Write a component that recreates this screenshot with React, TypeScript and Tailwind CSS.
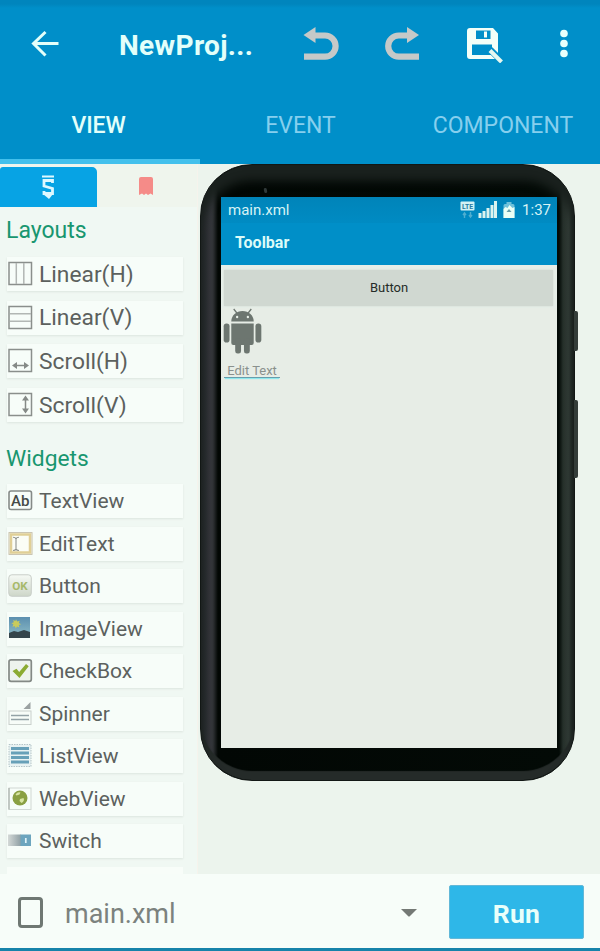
import React from "react";

type IconProps = { children: React.ReactNode };

function Icon({ children }: IconProps) {
  return (
    <svg width="26" height="26" viewBox="0 0 26 26" fill="none" className="shrink-0">
      {children}
    </svg>
  );
}

const frame = <rect x="2" y="1.5" width="22.5" height="22" stroke="#8a8f8c" strokeWidth="1.5" />;

const layouts = [
  {
    name: "Linear(H)",
    icon: (
      <Icon>
        {frame}
        <path d="M9.3 2v21M16.8 2v21" stroke="#b2b7b4" strokeWidth="1.5" />
      </Icon>
    ),
  },
  {
    name: "Linear(V)",
    icon: (
      <Icon>
        {frame}
        <path d="M3 8.7h21M3 16.3h21" stroke="#b2b7b4" strokeWidth="1.5" />
      </Icon>
    ),
  },
  {
    name: "Scroll(H)",
    icon: (
      <Icon>
        {frame}
        <path d="M7 17.5h13" stroke="#858a87" strokeWidth="1.5" />
        <path d="M5 17.5l5-3.5v7zM22 17.5l-5-3.5v7z" fill="#858a87" />
      </Icon>
    ),
  },
  {
    name: "Scroll(V)",
    icon: (
      <Icon>
        {frame}
        <path d="M18.5 6v13" stroke="#858a87" strokeWidth="1.5" />
        <path d="M18.5 3.5l-3.5 5h7zM18.5 21.5l-3.5-5h7z" fill="#858a87" />
      </Icon>
    ),
  },
];

const widgets = [
  {
    name: "TextView",
    icon: (
      <Icon>
        <rect x="2" y="3" width="22.5" height="18.5" rx="2" stroke="#858a87" strokeWidth="1.6" />
        <text x="13.2" y="17.5" textAnchor="middle" fontFamily="Roboto, sans-serif" fontSize="15.5" fontWeight="500" fill="#454a47" textLength="18.5" lengthAdjust="spacingAndGlyphs">
          Ab
        </text>
      </Icon>
    ),
  },
  {
    name: "EditText",
    icon: (
      <Icon>
        <rect x="2" y="1.6" width="23" height="21.8" stroke="#c6bfaa" fill="#fbfdf6" />
        <rect x="4" y="3.5" width="19" height="18" stroke="#e0cf96" strokeWidth="2.5" fill="#fbfdf6" />
        <path d="M6 6.2q2.5 0 3 1.6q.5-1.6 3-1.6M9 7.5v11M6 19.5q2.5 0 3-1.5q.5 1.5 3 1.5" stroke="#8f928d" strokeWidth="1.1" />
      </Icon>
    ),
  },
  {
    name: "Button",
    icon: (
      <Icon>
        <defs>
          <linearGradient id="okFill" x1="0" y1="0" x2="0" y2="1">
            <stop offset="0" stopColor="#f6faf5" />
            <stop offset="1" stopColor="#cdd6c8" />
          </linearGradient>
        </defs>
        <rect x="1.8" y="1.8" width="22.5" height="21.5" rx="3" fill="url(#okFill)" stroke="#c8cec8" />
        <text x="13" y="16.5" textAnchor="middle" fontFamily="Roboto, sans-serif" fontSize="11" fontWeight="700" fill="#a7b96b" textLength="15.5" lengthAdjust="spacingAndGlyphs">
          OK
        </text>
      </Icon>
    ),
  },
  {
    name: "ImageView",
    icon: (
      <Icon>
        <defs>
          <linearGradient id="sky" x1="0" y1="0" x2="0" y2="1">
            <stop offset="0" stopColor="#5c8faf" />
            <stop offset="1" stopColor="#90bfc8" />
          </linearGradient>
        </defs>
        <rect x="2" y="1" width="21" height="21" fill="url(#sky)" />
        <path d="M2 17l5-2 4 1 6-2 6 2v6H2z" fill="#35454b" />
        <path d="M9 3.200l1.200 2.300 2.500-.7-.9 2.300 2.300 1.100-2.400.9.700 2.400-2.400-.9-1.200 2-.9-2.400-2.500.5 1-2.400-2-1.100 2.400-.9-.6-2.200 2.200.9z" fill="#c9cb5c" />
      </Icon>
    ),
  },
  {
    name: "CheckBox",
    icon: (
      <Icon>
        <rect x="2" y="1.8" width="22.3" height="21.5" rx="2" fill="#edf3ed" stroke="#838985" strokeWidth="1.7" />
        <path d="M5.5 13l4-2.2 2.7 3.2L19 6l2.7 2.2L12.5 20z" fill="#8bab32" />
      </Icon>
    ),
  },
  {
    name: "Spinner",
    icon: (
      <Icon>
        <path d="M23.5 1v7h-7z" fill="#9ba2a2" />
        <rect x="2" y="10" width="22" height="13.5" fill="#f7fcf8" stroke="#c9d0cc" />
        <path d="M4 14.5h18M4 18.5h18" stroke="#93a2a6" strokeWidth="1.5" />
      </Icon>
    ),
  },
  {
    name: "ListView",
    icon: (
      <Icon>
        <rect x="2" y="1.5" width="22" height="22" fill="#e8f2f2" stroke="#b5c5c8" strokeDasharray="1.5 1" />
        <path d="M4 5.5h18M4 10h18M4 14.5h18M4 19h18" stroke="#67a0b8" strokeWidth="2.8" />
      </Icon>
    ),
  },
  {
    name: "WebView",
    icon: (
      <Icon>
        <rect x="2" y="2" width="22" height="21.5" stroke="#d1d8d3" />
        <path d="M2 2v21.5" stroke="#9da59f" />
        <circle cx="13" cy="12" r="7.5" fill="#8aa043" />
        <path d="M8.500 8.500q2-3 5-2l-1 2-3 1zM13 13l3.500-1q1.500 3-2 5l-2-2z" fill="#d8e5a1" />
      </Icon>
    ),
  },
  {
    name: "Switch",
    icon: (
      <Icon>
        <defs>
          <linearGradient id="track">
            <stop offset="0" stopColor="#d4d9d7" />
            <stop offset="1" stopColor="#8f9fa4" />
          </linearGradient>
        </defs>
        <rect x="1" y="6.5" width="13" height="11.5" fill="url(#track)" />
        <rect x="13.500" y="6.5" width="10.5" height="11.5" fill="#6ca5be" />
        <path d="M18.800 10v5" stroke="#e0f3f8" strokeWidth="1.7" />
      </Icon>
    ),
  },
];

type RowProps = { name: string; icon: React.ReactNode; textClass: string };

function PaletteRow({ name, icon, textClass }: RowProps) {
  return (
    <div className="ml-[7px] flex h-[34px] w-[176px] items-center bg-[#f7fdf9] shadow-[0_1px_2px_#dce5df]">
      <div className="flex">{icon}</div>
      <span className={`ml-[6px] leading-none text-[#5c615e] ${textClass}`}>{name}</span>
    </div>
  );
}

function Header() {
  return (
    <header className="flex h-[164px] shrink-0 flex-col bg-[linear-gradient(#0085bd_0,#0085bd_4px,#008fc9_8px)] text-[#e3fffa]">
      <div className="flex h-[88px] items-center pl-[30px]">
        <svg width="30" height="30" viewBox="0 0 30 30" fill="none" stroke="currentColor" strokeWidth="3" className="shrink-0">
          <path d="M15.5 3L3.5 14.5L15.5 26.5M3.5 14.500h25" />
        </svg>
        <h1 className="ml-[59px] w-[182px] pt-[3px] text-[28px] font-bold leading-none tracking-[0.35px]">NewProj...</h1>
        <svg width="38" height="38" viewBox="0 0 38 38" fill="none" className="shrink-0">
          <path d="M13 10.5h11a10.6 10.6 0 010 21.200H3" stroke="#c5c9c8" strokeWidth="6.2" />
          <path d="M2.5 10l12-8v16z" fill="#c5c9c8" />
        </svg>
        <svg width="38" height="38" viewBox="0 0 38 38" fill="none" className="ml-[44px] shrink-0">
          <path d="M25 10.5H15.800a10.600 10.600 0 000 21.200H36" stroke="#c5c9c8" strokeWidth="6.2" />
          <path d="M36 10l-12-8v16z" fill="#c5c9c8" />
        </svg>
        <svg width="40" height="38" viewBox="0 0 40 38" fill="none" className="ml-[44px] shrink-0">
          <path fillRule="evenodd" d="M5 3h23l5 5.500V31a3 3 0 01-3 3H5a3 3 0 01-3-3V6a3 3 0 013-3zM11 5.500v8.500h14.500V5.500zM7 19.500v10.500h20V19.500z" fill="#f4fff8" />
          <path d="M20.500 6.500v6" stroke="#f4fff8" strokeWidth="3" />
          <path d="M25 24.5l12 12" stroke="#008fc9" strokeWidth="6.5" />
          <path d="M25 25.5l11.500 11.500" stroke="#e6f8f0" strokeWidth="4" />
        </svg>
        <svg width="10" height="30" viewBox="0 0 10 30" fill="#e9fffb" className="ml-[54px] shrink-0">
          <circle cx="5" cy="4.5" r="3.8" />
          <circle cx="5" cy="14.5" r="3.8" />
          <circle cx="5" cy="24.5" r="3.8" />
        </svg>
      </div>
      <nav className="grid flex-1 grid-cols-[200px_200px_200px] text-center text-[23px] leading-none">
        <div className="border-b-[5px] border-[#43c0ec] pt-[26px] pr-[3px] font-medium tracking-[-0.1px]">VIEW</div>
        <div className="pt-[26px] pl-[1px] text-[#86cfee]">EVENT</div>
        <div className="pt-[26px] pl-[6px] text-[#86cfee]">COMPONENT</div>
      </nav>
    </header>
  );
}

function Palette() {
  return (
    <aside className="flex w-[198px] shrink-0 flex-col overflow-hidden border-r border-[#f6f3ec] bg-[#f0f8f3]">
      <div className="flex h-[43px] shrink-0 bg-[#eff5ed] pt-[3px]">
        <div className="flex w-[97px] items-center justify-center rounded-tr-[5px] rounded-tl-[3px] bg-[#07a3e4]">
          <svg width="16" height="26" viewBox="0 0 16 26" fill="none" stroke="#dff8ff" className="mr-[1px]">
            <path d="M2 2.500h12" strokeWidth="2" />
            <path d="M12.500 9V6.500H4v5.500l8.500 2.500v5H4V17" strokeWidth="2.800" />
            <path d="M3 20h10l-4 5z" fill="#dff8ff" stroke="none" />
          </svg>
        </div>
        <div className="flex flex-1 items-center justify-center">
          <svg width="16" height="20" viewBox="0 0 16 20" className="mr-[3px] mb-[2px]">
            <path d="M3 1h10q2 0 2 2v16l-2.500-1.500L10 19l-2-1.500L6 19l-2-1.500L1 19V3q0-2 2-2z" fill="#f58b88" />
          </svg>
        </div>
      </div>
      <h2 className="mt-[11px] ml-[6px] h-[24px] pt-[1px] text-[23px] leading-[24px] text-[#18966f]">Layouts</h2>
      <div className="mt-[15px] flex flex-col gap-[9.7px]">
        {layouts.map((item) => (
          <PaletteRow key={item.name} name={item.name} icon={item.icon} textClass="pt-[2px] text-[22.8px]" />
        ))}
      </div>
      <h2 className="mt-[24px] ml-[6px] h-[24px] pt-[1px] text-[22.8px] leading-[24px] text-[#18966f]">Widgets</h2>
      <div className="mt-[14px] flex flex-col gap-[8.5px]">
        {widgets.map((item) => (
          <PaletteRow key={item.name} name={item.name} icon={item.icon} textClass="pt-[1px] text-[21px]" />
        ))}
        <div className="ml-[7px] h-[34px] w-[176px] bg-[#f8fdf9]" />
      </div>
    </aside>
  );
}

function StatusBar() {
  return (
    <div className="flex h-[26px] items-center bg-[linear-gradient(#0084b9,#008bc3)] pr-[6px] pl-[7px] text-[15px] leading-none text-[#d6f3f5]">
      <span>main.xml</span>
      <svg width="15" height="20" viewBox="0 0 15 20" className="ml-auto">
        <rect x="0.5" y="1.5" width="14" height="9" rx="1" fill="#d3f2f5" />
        <text x="7.5" y="8.9" fontFamily="Roboto, sans-serif" fontSize="8" fontWeight="700" textAnchor="middle" textLength="11" lengthAdjust="spacingAndGlyphs" fill="#247ba1">LTE</text>
        <path d="M4.5 13v5M10.5 12v5M3 15l1.5-2 1.5 2M9 15l1.5 2 1.5-2" stroke="#4faed0" strokeWidth="1.4" fill="none" />
      </svg>
      <svg width="19" height="18" viewBox="0 0 19 18" className="ml-[3px]">
        <path d="M2 17v-5M6 17v-7M10 17V7M14 17V4M17.5 17V0" stroke="#dbf3ef" strokeWidth="3" />
      </svg>
      <svg width="12" height="18" viewBox="0 0 12 18" className="ml-[6px]">
        <path d="M3.5 1h5v2h1.5q1.5 0 1.5 1.5V17H.5V4.500Q.5 3 2 3h1.500z" fill="#6fc1da" />
        <path d="M.5 8l2-2 2 1 2-3 3 3 2-1v11H.5z" fill="#eafff5" />
        <path d="M6 8l-2.500 3h5z" fill="#669da9" />
      </svg>
      <span className="ml-[7px] text-[15px]">1:37</span>
    </div>
  );
}

function AndroidRobot() {
  return (
    <svg width="39" height="46" viewBox="0 0 40 46" preserveAspectRatio="none" fill="#6d7670">
      <path d="M8.5 13.500a11.500 10.500 0 0123 0z" />
      <path d="M11 1l4 5M29 1l-4 5" stroke="#6d7670" strokeWidth="1.3" />
      <circle cx="14.5" cy="9" r="1.2" fill="#e9f0e8" />
      <circle cx="25.5" cy="9" r="1.2" fill="#e9f0e8" />
      <path d="M8.5 15.500h23V35q0 2-2 2h-19q-2 0-2-2z" />
      <rect x="0.7" y="15.5" width="6" height="19" rx="2.8" />
      <rect x="33.3" y="15.5" width="6" height="19" rx="2.8" />
      <rect x="12.5" y="30" width="6" height="15.5" rx="2.5" />
      <rect x="21.5" y="30" width="6" height="15.5" rx="2.5" />
    </svg>
  );
}

function Phone() {
  return (
    <div className="relative ml-[2px] h-[617px] w-[375px] rounded-[52px] border border-[#121715] bg-[linear-gradient(90deg,#25272b_0,#35373c_10px,#303336_12px,#020704_17px,#030a06_358px,#26302b_362px,#35403a_368px,#18201c_373px)] pt-[32px] pr-[17px] pl-[20px] shadow-[inset_0_14px_10px_2px_#1a211e,inset_0_-9px_1px_#252b29]">
      <div className="absolute top-[23px] left-[63px] h-[5px] w-[3px] -rotate-12 rounded-full bg-[#303939]" />
      <div className="absolute top-[146px] -right-[4px] h-[40px] w-[4px] rounded-r-[2px] bg-[#343d39]" />
      <div className="absolute top-[235px] -right-[4px] h-[78px] w-[4px] rounded-r-[2px] bg-[#343d39]" />
      <div className="flex h-[551px] w-[336px] flex-col bg-[#e7ede6]">
        <StatusBar />
        <div className="flex h-[42px] items-center bg-[#008fc8] pb-[2px] pl-[14px] text-[16px] font-bold leading-none text-[#dcfbf8]">Toolbar</div>
        <div className="flex h-[43px] shrink-0 items-center bg-[#e6eee8] pt-[2px] pl-[3px]">
          <div className="flex h-[36px] w-[329px] items-center justify-center bg-[#d0d8d1] pl-[1px] text-[13px] leading-none text-[#252c28] shadow-[0_0_2px_#d0d8d1]">Button</div>
        </div>
        <div className="pl-[2px]">
          <AndroidRobot />
        </div>
        <div className="ml-[3px] flex h-[24px] w-[56px] items-end justify-center border-b border-[#679ead] text-[13px] leading-none text-[#8a918d] shadow-[0_2px_1px_-1px_#8ee8ec]">Edit Text</div>
      </div>
    </div>
  );
}

function BottomBar() {
  return (
    <footer className="flex h-[77px] shrink-0 items-center border-b-[3px] border-[#1683aa] bg-[#f7fdf9] pl-[18px]">
      <div className="mt-[2px] h-[31px] w-[25px] rounded-[4px] border-[3px] border-[#6f7873]" />
      <span className="ml-[22px] w-[335px] pt-[6px] text-[27px] leading-none text-[#7c827e]">main.xml</span>
      <svg width="18" height="10" viewBox="0 0 18 10" className="mt-[3px] shrink-0">
        <path d="M1 1h16L10 8q-1 1-2 0z" fill="#747975" />
      </svg>
      <button className="mt-[2px] ml-[31px] h-[54px] w-[135px] rounded-[2px] border border-[#62b8d8] bg-[#2eb7e8] pt-[4px] text-[26.5px] font-bold leading-none tracking-[0.2px] text-[#e9fffa]">
        Run
      </button>
    </footer>
  );
}

export default function App() {
  return (
    <div className="flex h-[951px] w-[600px] flex-col overflow-hidden bg-[#ecf4ed] [font-family:Roboto,sans-serif]">
      <Header />
      <main className="flex h-[710px] shrink-0">
        <Palette />
        <section className="flex-1">
          <Phone />
        </section>
      </main>
      <BottomBar />
    </div>
  );
}
